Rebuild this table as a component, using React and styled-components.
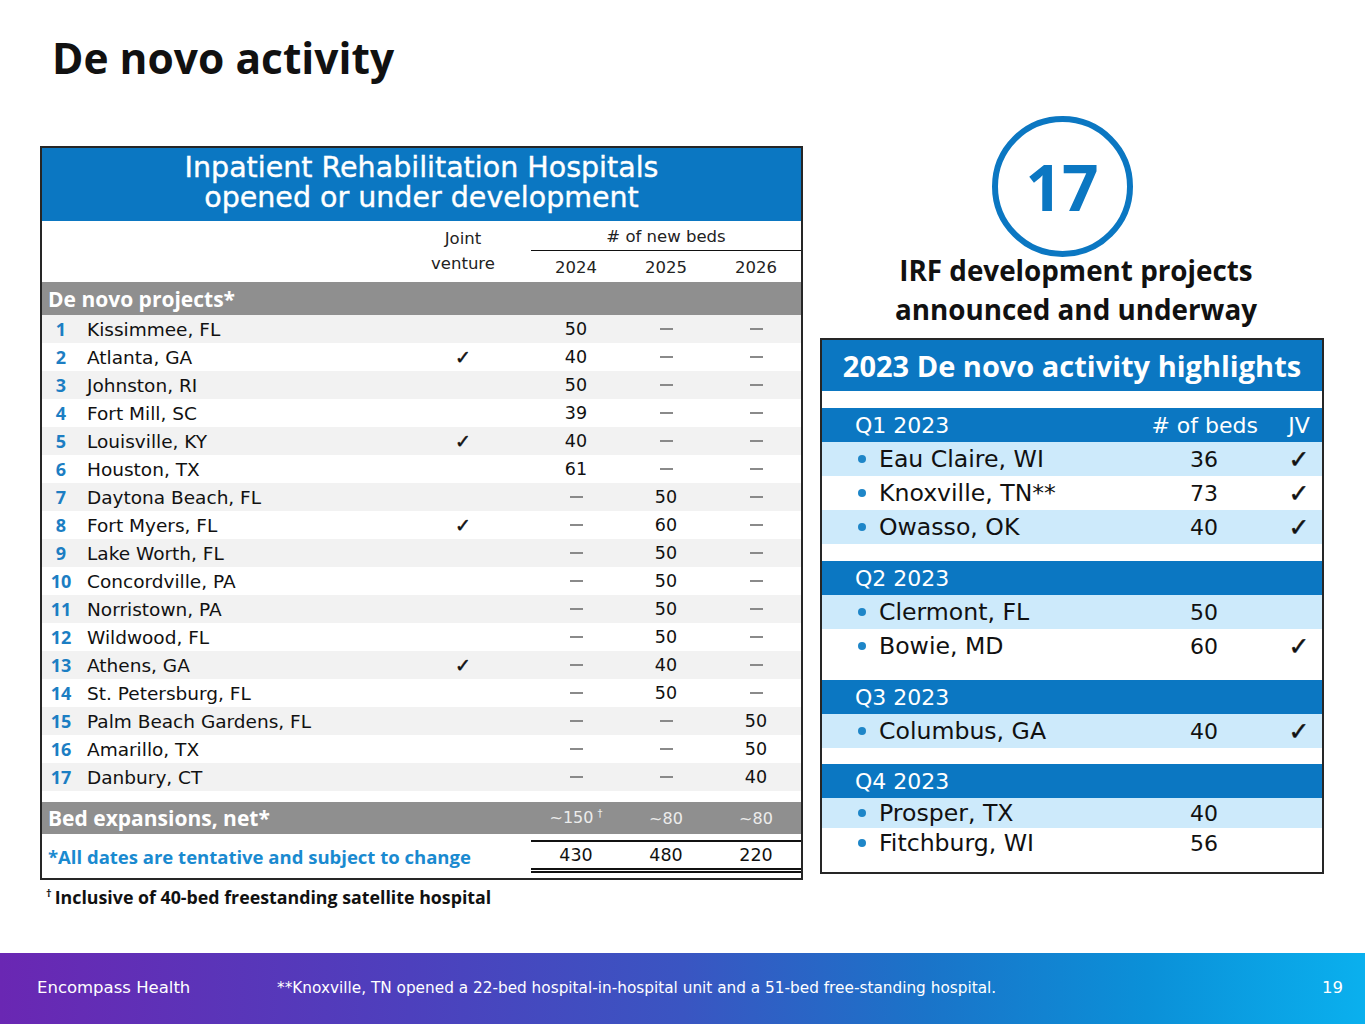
import React from 'react';
import styled, { createGlobalStyle } from 'styled-components';

const BLUE = '#0b77c2';
const BOLD = `"Open Sans", "DejaVu Sans", sans-serif`;
const REG = `"DejaVu Sans", "Open Sans", sans-serif`;
const COLS = '38px 1fr 88px 24px 90px 90px 90px';

const GlobalStyle = createGlobalStyle`
  html, body { margin: 0; padding: 0; background: #fff; }
  body { font-family: ${REG}; color: #111; }
`;

const projects = [
  ['Kissimmee, FL', false, '50', '-', '-'],
  ['Atlanta, GA', true, '40', '-', '-'],
  ['Johnston, RI', false, '50', '-', '-'],
  ['Fort Mill, SC', false, '39', '-', '-'],
  ['Louisville, KY', true, '40', '-', '-'],
  ['Houston, TX', false, '61', '-', '-'],
  ['Daytona Beach, FL', false, '-', '50', '-'],
  ['Fort Myers, FL', true, '-', '60', '-'],
  ['Lake Worth, FL', false, '-', '50', '-'],
  ['Concordville, PA', false, '-', '50', '-'],
  ['Norristown, PA', false, '-', '50', '-'],
  ['Wildwood, FL', false, '-', '50', '-'],
  ['Athens, GA', true, '-', '40', '-'],
  ['St. Petersburg, FL', false, '-', '50', '-'],
  ['Palm Beach Gardens, FL', false, '-', '-', '50'],
  ['Amarillo, TX', false, '-', '-', '50'],
  ['Danbury, CT', false, '-', '-', '40'],
];

const quarters = [
  {
    label: 'Q1 2023',
    showHead: true,
    gap: 17,
    rowH: 34,
    items: [
      ['Eau Claire, WI', '36', true],
      ['Knoxville, TN**', '73', true],
      ['Owasso, OK', '40', true],
    ],
  },
  {
    label: 'Q2 2023',
    gap: 17,
    rowH: 34,
    items: [
      ['Clermont, FL', '50', false],
      ['Bowie, MD', '60', true],
    ],
  },
  {
    label: 'Q3 2023',
    gap: 16,
    rowH: 34,
    items: [['Columbus, GA', '40', true]],
  },
  {
    label: 'Q4 2023',
    gap: 14,
    rowH: 30,
    items: [
      ['Prosper, TX', '40', false],
      ['Fitchburg, WI', '56', false],
    ],
  },
];

const Page = styled.div`
  width: 1365px;
  height: 1024px;
  display: flex;
  flex-direction: column;
  overflow: hidden;
`;

const Title = styled.h1`
  margin: 0;
  padding: 28px 0 0 52px;
  height: 60px;
  font-family: ${BOLD};
  font-weight: 700;
  font-size: 42.5px;
  line-height: 60px;
  color: #111;
`;

const Main = styled.div`
  flex: 1;
  display: flex;
  align-items: flex-start;
  padding-left: 40px;
  gap: 17px;
`;

const Column = styled.div`
  display: flex;
  flex-direction: column;
  padding-top: ${(p) => p.$top}px;
  width: ${(p) => p.$width}px;
  align-items: ${(p) => (p.$center ? 'center' : 'stretch')};
`;

const Panel = styled.div`
  border: 2px solid #262626;
  background: #fff;
  display: flex;
  flex-direction: column;
`;

const PanelHeader = styled.div`
  background: ${BLUE};
  color: #fff;
  height: 73px;
  box-sizing: border-box;
  padding-bottom: 3px;
  display: flex;
  flex-direction: column;
  justify-content: center;
  align-items: center;
  font-size: 28.5px;
  line-height: 30px;
  -webkit-text-stroke: 0.4px #fff;
`;

const Grid = styled.div`
  display: grid;
  grid-template-columns: ${COLS};
  align-items: center;
  height: ${(p) => p.$h}px;
  background: ${(p) => p.$bg || 'transparent'};
  margin-top: ${(p) => p.$mt || 0}px;
`;

const ColHead = styled.div`
  display: grid;
  grid-template-columns: ${COLS};
  grid-template-rows: 30px 31px;
  font-size: 16.5px;
  color: #222;
`;

const JointCell = styled.div`
  grid-column: 3;
  grid-row: 1 / 3;
  text-align: center;
  line-height: 25px;
  padding-top: 5px;
`;

const BedsCell = styled.div`
  grid-column: 5 / 8;
  grid-row: 1;
  text-align: center;
  border-bottom: 1.5px solid #111;
  line-height: 31px;
`;

const YearCell = styled.div`
  grid-row: 2;
  grid-column: ${(p) => p.$col};
  text-align: center;
  line-height: 33px;
`;

const SectionBar = styled.div`
  background: #8f8f8f;
  color: #fff;
  height: 33px;
  display: flex;
  align-items: center;
  padding-left: 6px;
  font-family: ${BOLD};
  font-weight: 700;
  font-size: 21px;
`;

const Num = styled.span`
  text-align: center;
  font-family: ${BOLD};
  font-weight: 700;
  font-size: 18px;
  color: #1c7ec3;
`;

const City = styled.span`
  padding-left: 7px;
  font-size: 18.5px;
  color: #111;
  white-space: nowrap;
`;

const Cell = styled.span`
  text-align: center;
  font-size: 17.5px;
  color: #111;
`;

const Dash = styled.span`
  justify-self: center;
  width: 13px;
  height: 2px;
  background: #8a8a8a;
`;

const Check = styled.span`
  text-align: center;
  font-size: ${(p) => p.$size || 17}px;
  line-height: 1;
  color: #111;
  -webkit-text-stroke: 0.5px #111;
`;

const BarLabel = styled.span`
  grid-column: 1 / 5;
  padding-left: 6px;
  color: #fff;
  font-family: ${BOLD};
  font-weight: 700;
  font-size: 21px;
`;

const BarValue = styled.span`
  text-align: center;
  color: #ececec;
  font-size: 16px;
`;

const Sup = styled.sup`
  font-size: 10px;
  margin-left: 4px;
`;

const TotalsRow = styled.div`
  display: grid;
  grid-template-columns: ${COLS};
  margin: 6px 0 5px;
`;

const TotalsNote = styled.span`
  grid-column: 1 / 5;
  padding-left: 6px;
  align-self: center;
  font-family: ${BOLD};
  font-weight: 700;
  font-size: 18.5px;
  color: #1a8ad0;
`;

const TotalCell = styled.span`
  text-align: center;
  font-size: 17.5px;
  line-height: 26px;
  border-top: 2px solid #111;
  border-bottom: 5px double #111;
`;

const Footnote = styled.div`
  margin-top: 2px;
  padding-left: 6px;
  font-family: ${BOLD};
  font-weight: 700;
  font-size: 17.8px;
  line-height: 22px;
  color: #111;

  sup {
    font-size: 11px;
    margin-right: 3px;
  }
`;

const Ring = styled.div`
  width: 141px;
  height: 141px;
  box-sizing: border-box;
  border: 6px solid ${BLUE};
  border-radius: 50%;
  display: flex;
  align-items: center;
  justify-content: center;
  margin-right: 20px;
  font-family: ${BOLD};
  font-weight: 700;
  font-size: 64px;
  color: ${BLUE};
  line-height: 1;
`;

const Caption = styled.div`
  margin-top: -6px;
  text-align: center;
  font-family: ${BOLD};
  font-weight: 700;
  font-size: 27.8px;
  line-height: 39px;
  color: #111;
  margin-bottom: 9px;
  padding-left: 8px;
`;

const HiPanel = styled(Panel)`
  align-self: stretch;
`;

const HiHeader = styled.div`
  background: ${BLUE};
  color: #fff;
  height: 51px;
  display: flex;
  align-items: center;
  justify-content: center;
  font-family: ${BOLD};
  font-weight: 700;
  font-size: 29px;
`;

const Spacer = styled.div`
  height: ${(p) => p.$h}px;
`;

const HiRow = styled.div`
  display: grid;
  grid-template-columns: 1fr 176px 46px;
  align-items: center;
  height: ${(p) => p.$h}px;
  background: ${(p) => p.$bg};
  color: ${(p) => (p.$head ? '#fff' : '#111')};
  font-size: 22px;
`;

const QLabel = styled.span`
  padding-left: 33px;
`;

const HiName = styled.span`
  display: flex;
  align-items: center;
  padding-left: 36px;
  gap: 13px;
  font-size: 23.6px;
  white-space: nowrap;
`;

const Dot = styled.span`
  width: 8px;
  height: 8px;
  border-radius: 50%;
  background: #1e86c8;
  flex: none;
`;

const HiNum = styled.span`
  text-align: right;
  padding-right: ${(p) => p.$pr}px;
  white-space: nowrap;
`;

const Footer = styled.div`
  height: 69px;
  flex: none;
  display: flex;
  align-items: center;
  padding: 0 22px 2px 37px;
  color: #fff;
  background: linear-gradient(90deg, #6a27b3 0%, #4d40bd 30%, #3a55c2 50%, #1a74c9 68%, #0b90d8 84%, #0ab0ee 100%);
`;

const Brand = styled.span`
  font-size: 16.5px;
  width: 240px;
`;

const FootNote = styled.span`
  flex: 1;
  font-size: 15.3px;
`;

const PageNum = styled.span`
  font-size: 16.5px;
`;

function ProjectTable() {
  return (
    <Panel>
      <PanelHeader>
        <span>Inpatient Rehabilitation Hospitals</span>
        <span>opened or under development</span>
      </PanelHeader>
      <ColHead>
        <JointCell>
          Joint
          <br />
          venture
        </JointCell>
        <BedsCell># of new beds</BedsCell>
        <YearCell $col={5}>2024</YearCell>
        <YearCell $col={6}>2025</YearCell>
        <YearCell $col={7}>2026</YearCell>
      </ColHead>
      <SectionBar>De novo projects*</SectionBar>
      {projects.map(([city, jv, a, b, c], i) => (
        <Grid key={city} $h={28} $bg={i % 2 === 0 ? '#f2f2f2' : '#fff'}>
          <Num>{i + 1}</Num>
          <City>{city}</City>
          <Check $size={19}>{jv ? '✓' : ''}</Check>
          <span />
          {[a, b, c].map((v, k) => (v === '-' ? <Dash key={k} /> : <Cell key={k}>{v}</Cell>))}
        </Grid>
      ))}
      <Grid $h={32} $bg="#8f8f8f" $mt={11}>
        <BarLabel>Bed expansions, net*</BarLabel>
        <BarValue>
          ~150<Sup>†</Sup>
        </BarValue>
        <BarValue>~80</BarValue>
        <BarValue>~80</BarValue>
      </Grid>
      <TotalsRow>
        <TotalsNote>*All dates are tentative and subject to change</TotalsNote>
        <TotalCell>430</TotalCell>
        <TotalCell>480</TotalCell>
        <TotalCell>220</TotalCell>
      </TotalsRow>
    </Panel>
  );
}

function Highlights() {
  return (
    <HiPanel>
      <HiHeader>2023 De novo activity highlights</HiHeader>
      <Spacer $h={17} />
      {quarters.map((q) => (
        <React.Fragment key={q.label}>
          <HiRow $head $h={34} $bg={BLUE}>
            <QLabel>{q.label}</QLabel>
            <HiNum $pr={18}>{q.showHead ? '# of beds' : ''}</HiNum>
            <span style={{ textAlign: 'center' }}>{q.showHead ? 'JV' : ''}</span>
          </HiRow>
          {q.items.map(([name, beds, jv], i) => (
            <HiRow key={name} $h={q.rowH} $bg={i % 2 === 0 ? '#cdeafb' : '#fff'}>
              <HiName>
                <Dot />
                {name}
              </HiName>
              <HiNum $pr={58}>{beds}</HiNum>
              <Check $size={25}>{jv ? '✓' : ''}</Check>
            </HiRow>
          ))}
          <Spacer $h={q.gap} />
        </React.Fragment>
      ))}
    </HiPanel>
  );
}

export default function App() {
  return (
    <Page>
      <GlobalStyle />
      <Title>De novo activity</Title>
      <Main>
        <Column $top={58} $width={763}>
          <ProjectTable />
          <Footnote>
            <sup>†</sup>Inclusive of 40-bed freestanding satellite hospital
          </Footnote>
        </Column>
        <Column $top={28} $width={504} $center>
          <Ring>17</Ring>
          <Caption>
            IRF development projects
            <br />
            announced and underway
          </Caption>
          <Highlights />
        </Column>
      </Main>
      <Footer>
        <Brand>Encompass Health</Brand>
        <FootNote>
          **Knoxville, TN opened a 22-bed hospital-in-hospital unit and a 51-bed free-standing hospital.
        </FootNote>
        <PageNum>19</PageNum>
      </Footer>
    </Page>
  );
}
